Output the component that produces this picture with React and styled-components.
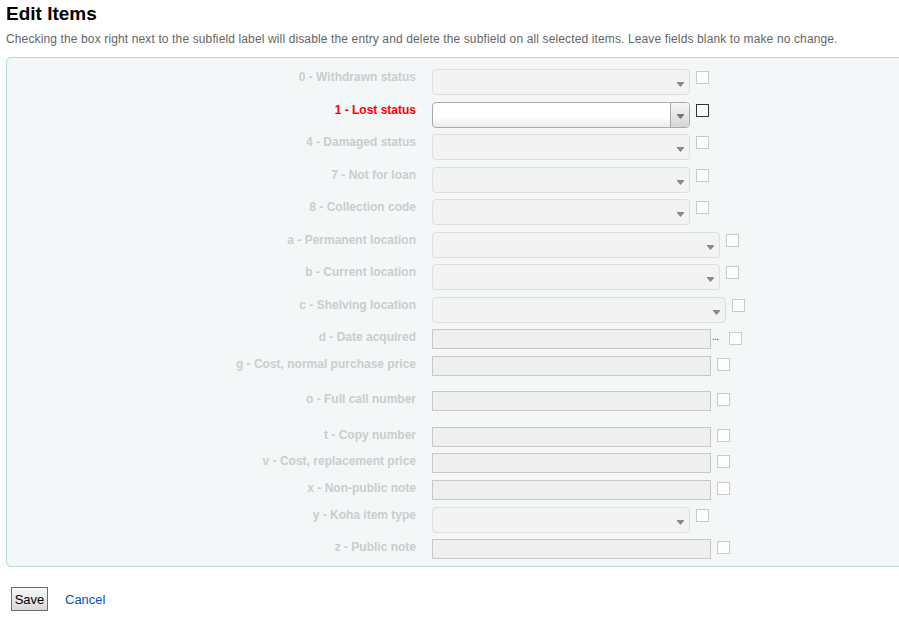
import styled, { createGlobalStyle } from "styled-components";

const GlobalStyle = createGlobalStyle`
  html, body {
    margin: 0;
    padding: 0;
    background: #fff;
    overflow: hidden;
  }
  body {
    font-family: "Liberation Sans", Arial, sans-serif;
  }
`;

const Page = styled.div`
  padding: 0 0 0 6px;
  width: 893px;
  overflow: hidden;
`;

const Title = styled.h1`
  margin: 0;
  padding-top: 3px;
  font-size: 19px;
  line-height: 22px;
  font-weight: bold;
  color: #000;
`;

const Hint = styled.p`
  margin: 6px 0 0;
  font-size: 12px;
  line-height: 16px;
  letter-spacing: 0.13px;
  color: #666;
  white-space: nowrap;
`;

const Fieldset = styled.div`
  margin-top: 10px;
  width: 920px;
  box-sizing: border-box;
  border: 1px solid #b8d9da;
  border-radius: 5px;
  background: #f3f7f8;
  padding: 11px 0 7px;
  display: flex;
  flex-direction: column;
`;

const Row = styled.div`
  display: flex;
  align-items: flex-start;
  margin-top: ${(p) => p.$gap}px;
`;

const Label = styled.label`
  width: 409px;
  margin-right: 16px;
  text-align: right;
  font-size: 12px;
  line-height: 16px;
  font-weight: bold;
  color: ${(p) => (p.$active ? "#ff0000" : "#cdcdcd")};
`;

const SelectBox = styled.div`
  width: ${(p) => p.$w}px;
  height: 26px;
  box-sizing: border-box;
  border: 1px solid ${(p) => (p.$active ? "#aaa" : "#dfdfdf")};
  border-radius: 4px;
  background: ${(p) =>
    p.$active ? "linear-gradient(#fff 0%, #fff 55%, #ececec 100%)" : "#f3f3f3"};
  display: flex;
  justify-content: flex-end;
  overflow: hidden;
`;

const ArrowBox = styled.div`
  width: 18px;
  height: 100%;
  display: flex;
  align-items: center;
  justify-content: center;
  border-left: ${(p) => (p.$active ? "1px solid #aaa" : "none")};
  background: ${(p) =>
    p.$active ? "linear-gradient(#f6f6f6, #d6d6d6)" : "transparent"};

  svg {
    margin-top: ${(p) => (p.$active ? "3px" : "5px")};
  }
`;

const TextInput = styled.div`
  width: ${(p) => p.$w}px;
  height: 20px;
  box-sizing: border-box;
  border: 1px solid #c8c8c8;
  background: #efefef;
`;

const Check = styled.input.attrs({ type: "checkbox" })`
  appearance: none;
  margin: ${(p) => p.$top}px 0 0 ${(p) => p.$left}px;
  width: 13px;
  height: 13px;
  box-sizing: border-box;
  border: 1px solid ${(p) => (p.$active ? "#333" : "#cbcbcb")};
  background: #fff;
  flex-shrink: 0;
`;

const Dots = styled.a`
  font-size: 10px;
  line-height: 10px;
  color: #1a4fd6;
  margin: 3px 0 0 1px;
  letter-spacing: -0.6px;
  text-decoration: none;
`;

const Actions = styled.div`
  margin-top: 20px;
  padding-left: 5px;
  display: flex;
  align-items: center;
  gap: 17px;
`;

const SaveButton = styled.button`
  width: 37px;
  height: 24px;
  padding: 0;
  border: 1px solid #6d6d6d;
  background: linear-gradient(#f7f7f7, #dadada);
  font-family: "Liberation Sans", Arial, sans-serif;
  font-size: 13px;
  color: #000;
`;

const CancelLink = styled.a`
  font-size: 13px;
  color: #0553b5;
  text-decoration: none;
`;

const Arrow = ({ active }) => (
  <svg width="7" height="5" viewBox="0 0 7 5">
    <rect x="0" y="0" width="7" height="1" fill={active ? "#777" : "#8a8a8a"} />
    <polygon points="0,1 7,1 3.5,5" fill={active ? "#777" : "#8a8a8a"} />
  </svg>
);

const fields = [
  { label: "0 - Withdrawn status", type: "select", w: 258, gap: 0 },
  { label: "1 - Lost status", type: "select", w: 258, gap: 7, active: true },
  { label: "4 - Damaged status", type: "select", w: 258, gap: 6 },
  { label: "7 - Not for loan", type: "select", w: 258, gap: 7 },
  { label: "8 - Collection code", type: "select", w: 258, gap: 6 },
  { label: "a - Permanent location", type: "select", w: 288, gap: 7 },
  { label: "b - Current location", type: "select", w: 288, gap: 6 },
  { label: "c - Shelving location", type: "select", w: 294, gap: 7 },
  { label: "d - Date acquired", type: "date", w: 279, gap: 6 },
  { label: "g - Cost, normal purchase price", type: "text", w: 279, gap: 7 },
  { label: "o - Full call number", type: "text", w: 279, gap: 15 },
  { label: "t - Copy number", type: "text", w: 279, gap: 16 },
  { label: "v - Cost, replacement price", type: "text", w: 279, gap: 6 },
  { label: "x - Non-public note", type: "text", w: 279, gap: 7 },
  { label: "y - Koha item type", type: "select", w: 258, gap: 7 },
  { label: "z - Public note", type: "text", w: 279, gap: 6 },
];

const Field = ({ field }) => {
  const { label, type, w, gap, active } = field;
  return (
    <Row $gap={gap}>
      <Label $active={active}>{label}</Label>
      {type === "select" ? (
        <SelectBox $w={w} $active={active}>
          <ArrowBox $active={active}>
            <Arrow active={active} />
          </ArrowBox>
        </SelectBox>
      ) : (
        <TextInput $w={w} />
      )}
      {type === "date" && <Dots href="#">...</Dots>}
      <Check
        $active={active}
        $top={type === "date" ? 3 : 2}
        $left={type === "date" ? 10 : 6}
        disabled={!active}
        readOnly
      />
    </Row>
  );
};

const App = () => {
  return (
    <Page>
      <GlobalStyle />
      <Title>Edit Items</Title>
      <Hint>
        Checking the box right next to the subfield label will disable the entry and delete
        the subfield on all selected items. Leave fields blank to make no change.
      </Hint>
      <Fieldset>
        {fields.map((f) => (
          <Field key={f.label} field={f} />
        ))}
      </Fieldset>
      <Actions>
        <SaveButton>Save</SaveButton>
        <CancelLink href="#">Cancel</CancelLink>
      </Actions>
    </Page>
  );
};

export default App;
